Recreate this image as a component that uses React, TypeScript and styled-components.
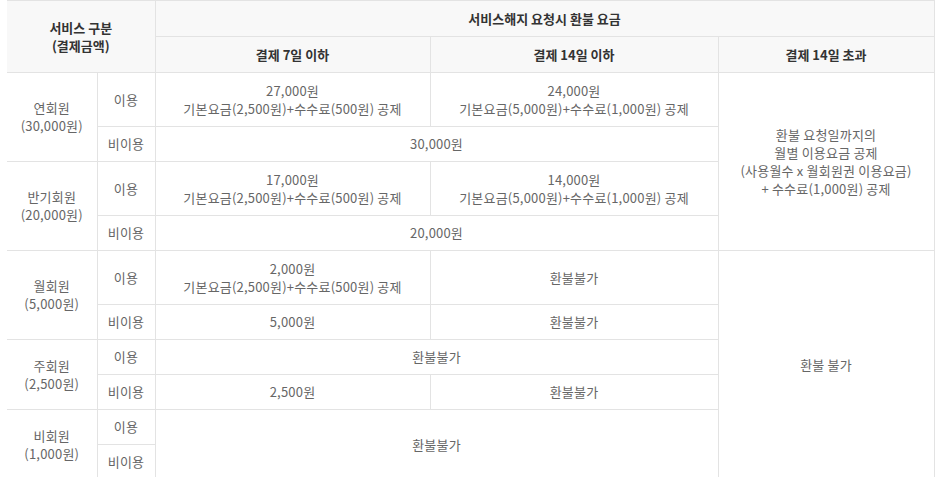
import React from "react";
import styled, { createGlobalStyle } from "styled-components";

const GlobalStyle = createGlobalStyle`
  html, body { margin: 0; padding: 0; background: #fff; }
  body { font-family: "Noto Sans CJK KR", "Noto Sans", sans-serif; }
`;

const Wrap = styled.div`
  padding-left: 7px;
`;

const Table = styled.table`
  border-collapse: collapse;
  table-layout: fixed;
  width: 927px;
  font-size: 13px;
  color: #666;
  border-top: 1px solid #e3e3e3;
`;

const Th = styled.th`
  background: #f8f8f8;
  color: #333;
  font-weight: bold;
  font-size: 13px;
  line-height: 18px;
  height: 35px;
  padding: 0 4px;
  text-align: center;
  vertical-align: middle;
  border-bottom: 1px solid #e3e3e3;
  border-left: 1px solid #e3e3e3;
  &:last-child { border-right: 1px solid #e3e3e3; }
  &:first-child { border-left: none; }
`;

const ThSub = styled(Th)`
  &:first-child { border-left: 1px solid #e3e3e3; }
`;

const Row = styled.tr<{ $tall?: boolean }>`
  height: ${(p) => (p.$tall ? "54px" : "35px")};
`;

const Td = styled.td<{ $first?: boolean; $last?: boolean }>`
  padding: 0 4px;
  text-align: center;
  vertical-align: middle;
  line-height: 18px;
  letter-spacing: 0.2px;
  border-bottom: 1px solid #e3e3e3;
  border-left: ${(p) => (p.$first ? "none" : "1px solid #e3e3e3")};
  border-right: ${(p) => (p.$last ? "1px solid #e3e3e3" : "none")};
`;

const Col = styled.col<{ $w: number }>`
  width: ${(p) => p.$w}px;
`;

export default function App() {
  return (
    <>
      <GlobalStyle />
      <Wrap>
        <Table>
          <colgroup>
            <Col $w={90} />
            <Col $w={58} />
            <Col $w={275} />
            <Col $w={288} />
            <Col $w={216} />
          </colgroup>
          <thead>
            <tr>
              <Th rowSpan={2} colSpan={2}>
                서비스 구분
                <br />
                (결제금액)
              </Th>
              <Th colSpan={3}>서비스해지 요청시 환불 요금</Th>
            </tr>
            <tr>
              <ThSub>결제 7일 이하</ThSub>
              <ThSub>결제 14일 이하</ThSub>
              <ThSub>결제 14일 초과</ThSub>
            </tr>
          </thead>
          <tbody>
            <Row $tall>
              <Td $first rowSpan={2}>
                연회원
                <br />
                (30,000원)
              </Td>
              <Td>이용</Td>
              <Td>
                27,000원
                <br />
                기본요금(2,500원)+수수료(500원) 공제
              </Td>
              <Td>
                24,000원
                <br />
                기본요금(5,000원)+수수료(1,000원) 공제
              </Td>
              <Td $last rowSpan={4}>
                환불 요청일까지의
                <br />
                월별 이용요금 공제
                <br />
                (사용월수 x 월회원권 이용요금)
                <br />+ 수수료(1,000원) 공제
              </Td>
            </Row>
            <Row>
              <Td>비이용</Td>
              <Td colSpan={2}>30,000원</Td>
            </Row>
            <Row $tall>
              <Td $first rowSpan={2}>
                반기회원
                <br />
                (20,000원)
              </Td>
              <Td>이용</Td>
              <Td>
                17,000원
                <br />
                기본요금(2,500원)+수수료(500원) 공제
              </Td>
              <Td>
                14,000원
                <br />
                기본요금(5,000원)+수수료(1,000원) 공제
              </Td>
            </Row>
            <Row>
              <Td>비이용</Td>
              <Td colSpan={2}>20,000원</Td>
            </Row>
            <Row $tall>
              <Td $first rowSpan={2}>
                월회원
                <br />
                (5,000원)
              </Td>
              <Td>이용</Td>
              <Td>
                2,000원
                <br />
                기본요금(2,500원)+수수료(500원) 공제
              </Td>
              <Td>환불불가</Td>
              <Td $last rowSpan={6}>환불 불가</Td>
            </Row>
            <Row>
              <Td>비이용</Td>
              <Td>5,000원</Td>
              <Td>환불불가</Td>
            </Row>
            <Row>
              <Td $first rowSpan={2}>
                주회원
                <br />
                (2,500원)
              </Td>
              <Td>이용</Td>
              <Td colSpan={2}>환불불가</Td>
            </Row>
            <Row>
              <Td>비이용</Td>
              <Td>2,500원</Td>
              <Td>환불불가</Td>
            </Row>
            <Row>
              <Td $first rowSpan={2}>
                비회원
                <br />
                (1,000원)
              </Td>
              <Td>이용</Td>
              <Td colSpan={2} rowSpan={2}>
                환불불가
              </Td>
            </Row>
            <Row>
              <Td>비이용</Td>
            </Row>
          </tbody>
        </Table>
      </Wrap>
    </>
  );
}
